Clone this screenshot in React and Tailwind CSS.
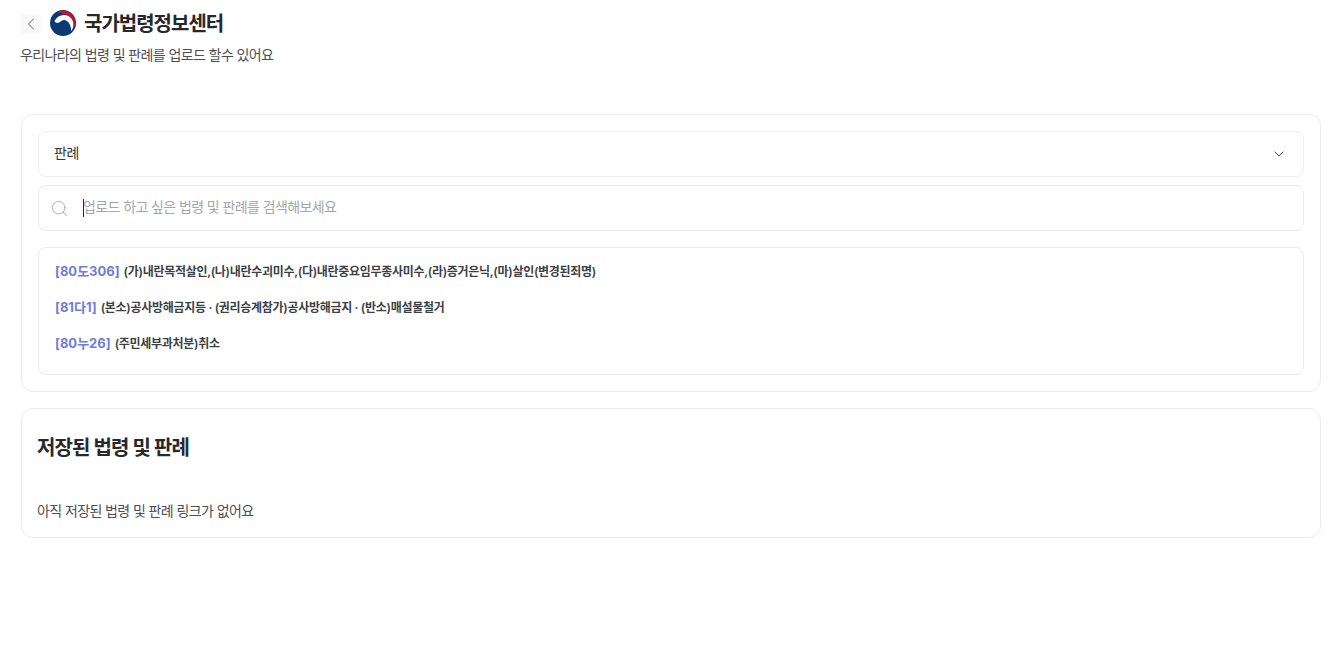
import React from 'react';
import { ChevronDown, ChevronLeft, Search } from 'lucide-react';

const results = [
  { id: '[80도306]', title: '(가)내란목적살인,(나)내란수괴미수,(다)내란중요임무종사미수,(라)증거은닉,(마)살인(변경된죄명)' },
  { id: '[81다1]', title: '(본소)공사방해금지등 · (권리승계참가)공사방해금지 · (반소)매설물철거' },
  { id: '[80누26]', title: '(주민세부과처분)취소' },
];

function GovLogo() {
  return (
    <svg width="26" height="26" viewBox="0 0 26 26" className="shrink-0">
      <circle cx="13" cy="13" r="13" fill="#0b3a73" />
      <path d="M7.5 1.8C9.2.9 11 .4 13 .4c7 0 12.6 5.6 12.6 12.6 0 1.5-.2 3-.8 4.3-.4-7-5.4-12.6-11.8-13.4-2-.2-4-1.2-5.500-2.600z" fill="#c8102e" />
      <path d="M4.500 11C6.500 7 10 5 14 5c5.500 0 9.500 4.500 9.500 9.500 0 2.500-1 5-2.500 6.500.5-6-3-11-7-11-3 0-4 3-6.500 3-1.500 0-2.500-1-3-2z" fill="#ffffff" />
    </svg>
  );
}

export default function App() {
  return (
    <div className="min-h-[646px] bg-white px-5 font-['Inter','Noto_Sans_CJK_KR',sans-serif] text-[#33363d]">
      <header className="pt-[10px]">
        <div className="flex h-[26px] items-center">
          <button className="mt-[2px] ml-px flex h-5 w-5 items-center justify-center rounded bg-[#f9f9fa] text-[#7d8086]">
            <ChevronLeft size={20} strokeWidth={1.25} />
          </button>
          <div className="ml-[9px]">
            <GovLogo />
          </div>
          <h1 className="ml-2 h-[26px] self-start text-[20px] leading-[28px] font-semibold tracking-[-1px] text-[#26282c]">국가법령정보센터</h1>
        </div>
        <p className="mt-[9px] text-[14px] leading-5 tracking-[-0.6px] text-[#4b4e55]">우리나라의 법령 및 판례를 업로드 할수 있어요</p>
      </header>

      <section className="mt-[49px] -mr-px ml-px rounded-xl border border-[#ebebed] p-4">
        <div className="flex h-[46px] items-center justify-between rounded-lg border border-[#f0f0f2] pr-[16px] pl-[15px]">
          <span className="pb-[3px] text-[14px] tracking-[-0.4px] text-[#33363d]">판례</span>
          <ChevronDown size={16} strokeWidth={1.5} className="text-[#4b4e55]" />
        </div>

        <div className="relative mt-2 flex h-[46px] items-center rounded-lg border border-[#ebebed] pl-[11px]">
          <Search size={19} strokeWidth={1} className="text-[#9a9da3]" />
          <span className="-mr-px ml-[14px] h-[18px] w-px bg-[#26282c]" />
          <span className="pb-[3px] text-[14px] tracking-[-0.6px] text-[#a3a6ac]">업로드 하고 싶은 법령 및 판례를 검색해보세요</span>
        </div>

        <ul className="mt-4 rounded-lg border border-[#ebebed] px-4 pt-[6px] pb-[12px]">
          {results.map((item) => (
            <li key={item.id} className="flex h-9 items-center gap-[4px] text-[12px] font-semibold tracking-[-0.3px]">
              <span className="text-[13px] font-bold tracking-normal text-[#6e7ce0]">{item.id}</span>
              <span className="text-[#3c3f46]">{item.title}</span>
            </li>
          ))}
        </ul>
      </section>

      <section className="mt-4 -mr-px ml-px rounded-xl border border-[#ebebed] px-[15px] pt-[24px] pb-[16px]">
        <h2 className="text-[20px] leading-[30px] font-semibold tracking-[-0.95px] text-[#26282c]">저장된 법령 및 판례</h2>
        <p className="mt-[38px] text-[14px] leading-5 tracking-[-0.6px] text-[#4b4e55]">아직 저장된 법령 및 판례 링크가 없어요</p>
      </section>
    </div>
  );
}
